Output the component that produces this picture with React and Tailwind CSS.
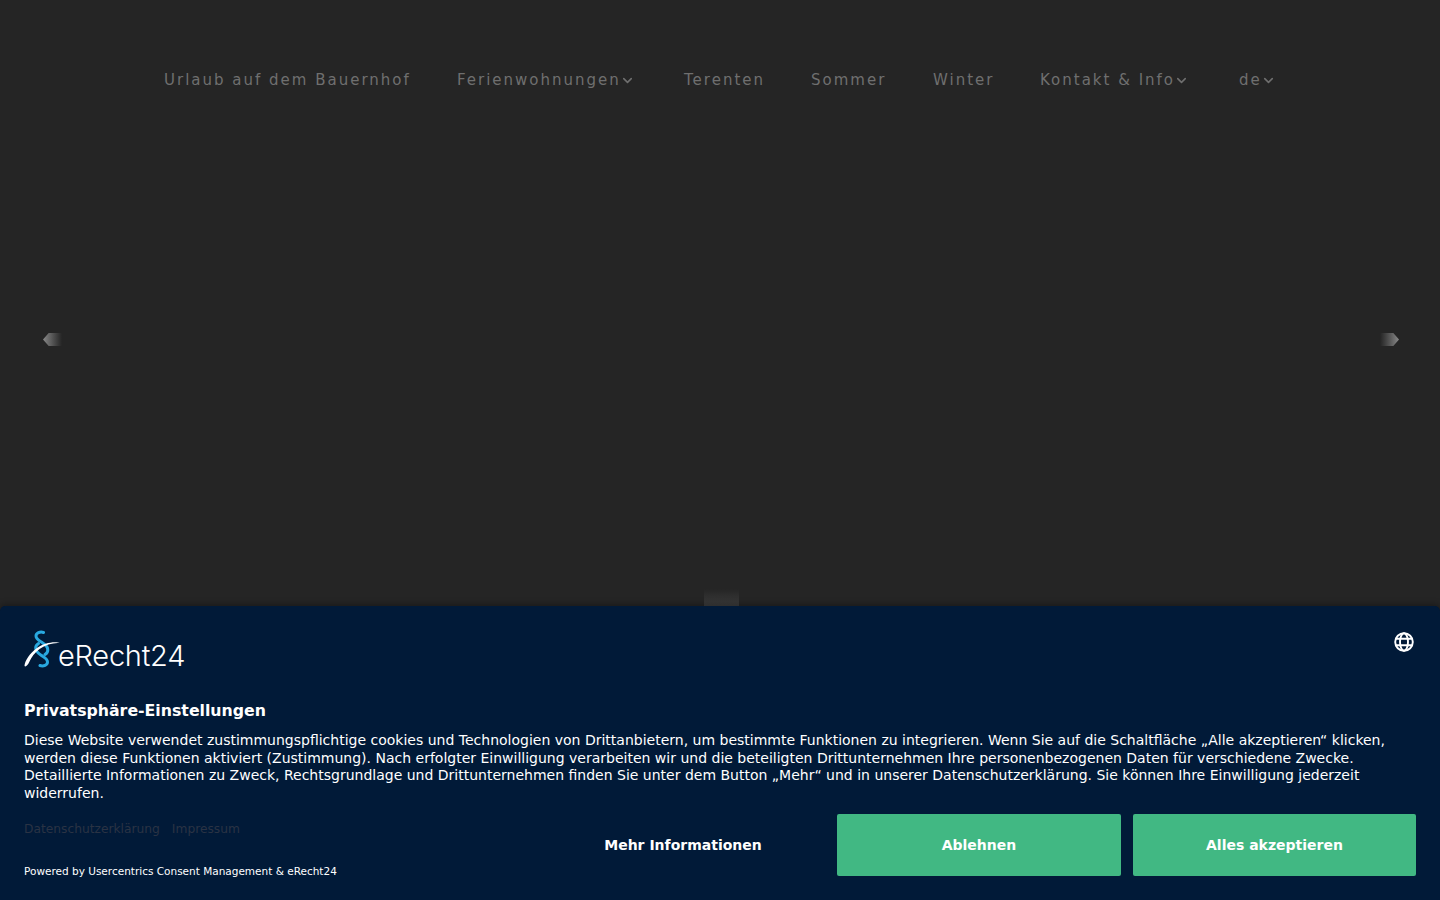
import React from 'react';
import { ChevronDown } from 'lucide-react';

const NAV_ITEMS = [
  { label: 'Urlaub auf dem Bauernhof', width: 'w-[293px]' },
  { label: 'Ferienwohnungen', menu: true, width: 'w-[227px]' },
  { label: 'Terenten', width: 'w-[127px]' },
  { label: 'Sommer', width: 'w-[122px]' },
  { label: 'Winter', width: 'w-[107px]' },
  { label: 'Kontakt & Info', menu: true, width: 'w-[199px]' },
  { label: 'de', menu: true, width: 'w-[85px]' },
];

function Logo() {
  return (
    <div className="flex items-end h-[38px]">
      <svg width="36" height="38" viewBox="0 0 36 38" fill="none">
        <path d="M19.500 2.500c-3.500-1.200-7.500.6-7.500 3.600 0 3.400 3.600 4.800 6.400 6.600 3 1.900 5.400 4 5.400 7.200 0 2.200-1.200 3.600-2.800 4.600" stroke="#29a9e0" strokeWidth="3" strokeLinecap="round" />
        <path d="M16 35.500c3.500 1.200 7.500-.6 7.500-3.600 0-3.400-3.600-4.800-6.400-6.600-3-1.900-5.400-4-5.400-7.200 0-2.200 1.200-3.600 2.800-4.600" stroke="#29a9e0" strokeWidth="3" strokeLinecap="round" />
        <path d="M.5 36C.5 31 6 23 13 18c6-4.300 15-6.500 21-5.500 1 .2 1.500.5 1.500.5-6-.5-14 1.500-20 6-5 3.800-8 8-10 12.500C4 35 1.500 37.500.5 36Z" fill="#ffffff" />
      </svg>
      <span className="font-['Inter',sans-serif] font-light text-[29px] leading-[31px] text-white ml-[-2px] mb-[-3px] tracking-[-0.25px]">eRecht24</span>
    </div>
  );
}

function SideArrow({ right }) {
  return (
    <div className={right
      ? "absolute top-[333px] left-[1380px] w-[19px] h-[13px] bg-gradient-to-r from-[#252525] to-[#8a8a8a] [clip-path:polygon(0_0,70%_0,100%_50%,70%_100%,0_100%)]"
      : "absolute top-[333px] left-[43px] w-[19px] h-[13px] bg-gradient-to-l from-[#252525] to-[#8a8a8a] [clip-path:polygon(30%_0,100%_0,100%_100%,30%_100%,0_50%)]"} />
  );
}

export default function App() {
  return (
    <div className="relative h-[900px] overflow-hidden bg-[#252525] font-['DejaVu_Sans',sans-serif] flex flex-col">
      <nav className="flex justify-center items-center pt-[70px] h-[360px] self-start pl-[140px] pb-[270px]">
        {NAV_ITEMS.map((item) => (
          <a key={item.label} className={`${item.width} shrink-0 flex items-center pl-[24px] text-[15px] leading-[20px] tracking-[2px] text-[#6f6f6f] whitespace-nowrap`}>
            {item.label}
            {item.menu && <ChevronDown size={15} strokeWidth={2.5} className="ml-[-1px] text-[#6f6f6f]" />}
          </a>
        ))}
      </nav>

      <SideArrow />
      <SideArrow right />

      <div className="flex-1 flex justify-center items-end pl-[3px]">
        <div className="w-[35px] h-[17px] bg-gradient-to-b from-[#252525] to-[#3c3c3c]" />
      </div>

      <section className="h-[294px] shrink-0 rounded-t-[5px] bg-[#011a38] px-[24px] pt-[24px] shadow-[0_-2px_6px_rgba(0,0,0,0.3)]">
        <div className="flex justify-between items-start">
          <Logo />
          <svg width="24" height="24" viewBox="0 0 24 24" fill="none" stroke="#ffffff" strokeWidth="1.9">
            <circle cx="12" cy="12" r="8.800" />
            <ellipse cx="12" cy="12" rx="4" ry="8.800" />
            <path d="M3.800 8.800h16.400M3.800 15.200h16.400" />
          </svg>
        </div>
        <h1 className="mt-[33px] text-[15.750px] leading-[20px] font-bold text-white">Privatsphäre-Einstellungen</h1>
        <p className="mt-[11px] text-[14px] leading-[17.5px] text-white">
          Diese Website verwendet zustimmungspflichtige cookies und Technologien von Drittanbietern, um bestimmte Funktionen zu integrieren. Wenn Sie auf die Schaltfläche „Alle akzeptieren“ klicken, werden diese Funktionen aktiviert (Zustimmung). Nach erfolgter Einwilligung verarbeiten wir und die beteiligten Drittunternehmen Ihre personenbezogenen Daten für verschiedene Zwecke. Detaillierte Informationen zu Zweck, Rechtsgrundlage und Drittunternehmen finden Sie unter dem Button „Mehr“ und in unserer Datenschutzerklärung. Sie können Ihre Einwilligung jederzeit widerrufen.
        </p>
        <div className="mt-[12px] flex justify-between">
          <div className="pt-[8px]">
            <div className="flex gap-[12px] text-[12.250px] leading-[15px] text-[#2a3344]">
              <a>Datenschutzerklärung</a>
              <a>Impressum</a>
            </div>
            <p className="mt-[27px] text-[10.500px] leading-[14px] text-white">Powered by Usercentrics Consent Management &amp; eRecht24</p>
          </div>
          <div className="flex gap-[12px] text-[14px] font-bold text-white">
            <button className="w-[284px] h-[62px]">Mehr Informationen</button>
            <button className="w-[284px] h-[62px] rounded-[2px] bg-[#41b883]">Ablehnen</button>
            <button className="w-[283px] h-[62px] rounded-[2px] bg-[#41b883]">Alles akzeptieren</button>
          </div>
        </div>
      </section>
    </div>
  );
}
